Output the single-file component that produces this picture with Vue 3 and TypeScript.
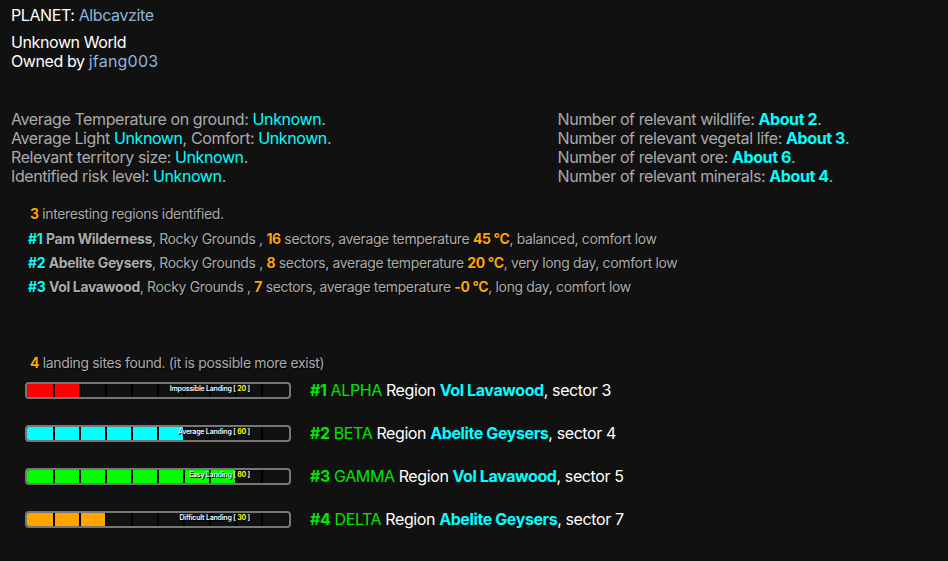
<script setup lang="ts">
interface Stat { label: string; value: string; extra?: { label: string; value: string } }
const leftStats: Stat[] = [
  { label: 'Average Temperature on ground: ', value: 'Unknown' },
  { label: 'Average Light ', value: 'Unknown', extra: { label: ', Comfort: ', value: 'Unknown' } },
  { label: 'Relevant territory size: ', value: 'Unknown' },
  { label: 'Identified risk level: ', value: 'Unknown' },
]
const rightStats = [
  { label: 'Number of relevant wildlife: ', value: 'About 2' },
  { label: 'Number of relevant vegetal life: ', value: 'About 3' },
  { label: 'Number of relevant ore: ', value: 'About 6' },
  { label: 'Number of relevant minerals: ', value: 'About 4' },
]
const regions = [
  { n: 1, name: 'Pam Wilderness', sectors: 16, temp: '45 °C', tail: 'balanced, comfort low' },
  { n: 2, name: 'Abelite Geysers', sectors: 8, temp: '20 °C', tail: 'very long day, comfort low' },
  { n: 3, name: 'Vol Lavawood', sectors: 7, temp: '-0 °C', tail: 'long day, comfort low' },
]
const sites = [
  { n: 1, code: 'ALPHA', region: 'Vol Lavawood', sector: 3, pct: 20, label: 'Impossible Landing', color: '#ff0000' },
  { n: 2, code: 'BETA', region: 'Abelite Geysers', sector: 4, pct: 60, label: 'Average Landing', color: '#00ffff' },
  { n: 3, code: 'GAMMA', region: 'Vol Lavawood', sector: 5, pct: 80, label: 'Easy Landing', color: '#00ff00' },
  { n: 4, code: 'DELTA', region: 'Abelite Geysers', sector: 7, pct: 30, label: 'Difficult Landing', color: '#ffa500' },
]
const ticks = 9
</script>

<template>
  <main class="page">
    <header class="head">
      <div class="planet">PLANET: <span class="link">Albcavzite</span></div>
      <div class="world">Unknown World</div>
      <div class="owner">Owned by <span class="link handle">jfang003</span></div>
    </header>

    <section class="stats">
      <div class="col">
        <div v-for="s in leftStats" :key="s.label">
          {{ s.label }}<span class="cyan">{{ s.value }}</span><template v-if="s.extra">{{ s.extra.label }}<span class="cyan">{{ s.extra.value }}</span></template>.
        </div>
      </div>
      <div class="col">
        <div v-for="s in rightStats" :key="s.label">
          {{ s.label }}<b class="cyan">{{ s.value }}</b>.
        </div>
      </div>
    </section>

    <section class="regions">
      <div class="regions-title"><b class="orange">3</b> interesting regions identified.</div>
      <div v-for="r in regions" :key="r.n" class="region">
        <b class="cyan">#{{ r.n }}</b> <b>{{ r.name }}</b>, Rocky Grounds , <b class="orange">{{ r.sectors }}</b> sectors, average temperature <b class="orange">{{ r.temp }}</b>, {{ r.tail }}
      </div>
    </section>

    <section class="sites">
      <div class="sites-title"><b class="orange">4</b> landing sites found. (it is possible more exist)</div>
      <div v-for="s in sites" :key="s.n" class="site">
        <div class="bar">
          <div class="fill" :style="{ width: s.pct + '%', background: s.color }"></div>
          <div class="ticks"><i v-for="t in ticks" :key="t"></i></div>
          <div class="bar-label">{{ s.label }} [ <b class="yellow">{{ s.pct }}</b> ]</div>
        </div>
        <div class="site-text">
          <b class="green">#{{ s.n }}</b> <span class="green">{{ s.code }}</span> Region <b class="cyan">{{ s.region }}</b>, sector {{ s.sector }}
        </div>
      </div>
    </section>
  </main>
</template>

<style>
html, body { margin: 0; background: #111111; }
</style>

<style scoped>
.page {
  box-sizing: border-box;
  width: 948px;
  height: 561px;
  overflow: hidden;
  background: #111111;
  color: #aaaaaa;
  font-family: "Inter", "Liberation Sans", sans-serif;
  font-size: 16px;
  line-height: 19px;
  letter-spacing: -0.4px;
  padding: 6px 11px 0;
}
b { font-weight: 700; }
.head { color: #ffffff; }
.link { color: #8fb4dc; }
.handle { letter-spacing: 0.2px; }
.planet { margin-bottom: 8px; }
.stats { display: flex; margin-top: 39px; }
.col { flex: none; width: 546.5px; }
.cyan { color: #00ffff; }
.orange { color: #ffa500; }
.green { color: #00e600; }
.yellow { color: #ffff00; text-shadow: 0 0 2px #000; }
.regions {
  margin: 16px 0 0 17px;
  font-size: 14px;
  line-height: 24px;
  letter-spacing: -0.36px;
  text-shadow: 1px 1px 0 #000;
}
.regions-title { padding-left: 2px; margin-bottom: 1px; }
.sites { margin: 54px 0 0 14px; }
.sites-title {
  padding-left: 5px;
  font-size: 14px;
  line-height: 20px;
  letter-spacing: -0.34px;
  text-shadow: 1px 1px 0 #000;
  margin-bottom: 9px;
}
.site { display: flex; align-items: center; gap: 19px; height: 17px; margin-bottom: 26px; }
.bar {
  box-sizing: border-box;
  position: relative;
  flex: none;
  width: 266px;
  height: 17px;
  border: 2px solid #777777;
  border-radius: 4px;
  overflow: hidden;
}
.fill { height: 100%; }
.ticks { position: absolute; inset: 0; display: flex; padding-left: 26px; gap: 24px; }
.ticks i { width: 2px; height: 100%; background: #000; }
.bar-label {
  position: absolute;
  top: 0;
  right: 39px;
  font-size: 7px;
  font-weight: 600;
  line-height: 9px;
  letter-spacing: -0.2px;
  color: #f4f8ff;
  text-shadow: 1px 1px 0 #000;
  white-space: nowrap;
}
.site-text { color: #ffffff; white-space: nowrap; }
</style>
